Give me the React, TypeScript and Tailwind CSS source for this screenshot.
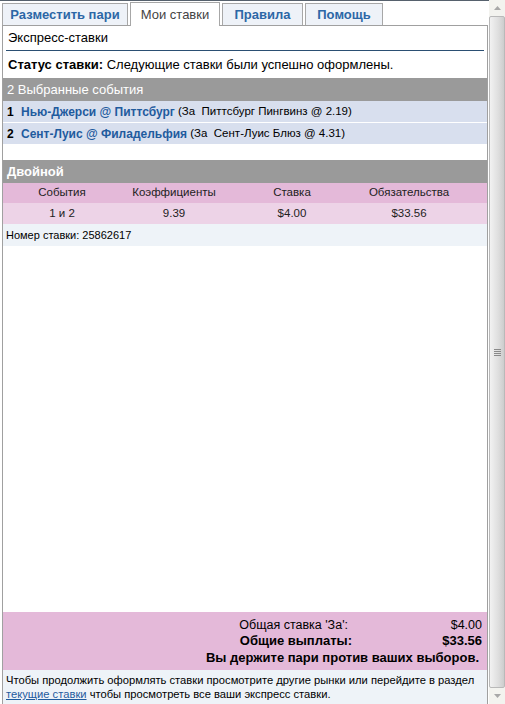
import React from "react";

const font = { fontFamily: '"Liberation Sans", Arial, sans-serif' };

function Scrollbar() {
  return (
    <div className="flex h-[704px] w-[16px] flex-col bg-[#f3f3ef]">
      <div className="flex h-[16px] items-center justify-center">
        <svg width="7" height="4" viewBox="0 0 7 4">
          <path d="M0 4 L3.5 0 L7 4 Z" fill="#a8a8a8" />
        </svg>
      </div>
      <div className="flex flex-1 items-center justify-center rounded-[2px] border border-[#b9b9b9] bg-[linear-gradient(90deg,#f2f2f2,#dedede_60%,#cdcdcd)]">
        <div className="flex flex-col gap-[1px]">
          <div className="h-[1px] w-[7px] bg-[#8a8a8a]" />
          <div className="h-[1px] w-[7px] bg-[#8a8a8a]" />
          <div className="h-[1px] w-[7px] bg-[#8a8a8a]" />
          <div className="h-[1px] w-[7px] bg-[#8a8a8a]" />
        </div>
      </div>
      <div className="flex h-[16px] items-center justify-center">
        <svg width="7" height="4" viewBox="0 0 7 4">
          <path d="M0 0 L3.5 4 L7 0 Z" fill="#a8a8a8" />
        </svg>
      </div>
    </div>
  );
}

export default function App() {
  return (
    <div className="flex h-[704px] w-[505px] overflow-hidden bg-white" style={font}>
      <div className="flex w-[489px] flex-col border-t border-[#56616d]">
        {/* tabs */}
        <div className="flex h-[24px] items-end gap-[2px] pl-[2px]">
          <div className="flex h-[22px] w-[126px] items-center justify-center border border-b-0 border-[#a7a7a7] bg-[#eef2f8] text-[13px] font-bold text-[#2c67a6]">
            Разместить пари
          </div>
          <div className="relative -mb-[1px] flex h-[24px] w-[90px] items-center justify-center border border-b-0 border-[#a7a7a7] bg-white text-[13px] text-[#444]">
            Мои ставки
          </div>
          <div className="flex h-[22px] w-[81px] items-center justify-center border border-b-0 border-[#a7a7a7] bg-[#eef2f8] text-[13px] font-bold text-[#2c67a6]">
            Правила
          </div>
          <div className="flex h-[22px] w-[78px] items-center justify-center border border-b-0 border-[#a7a7a7] bg-[#eef2f8] text-[13px] font-bold text-[#2c67a6]">
            Помощь
          </div>
        </div>
        {/* panel */}
        <div className="ml-[2px] mr-[1px] flex flex-1 flex-col border border-b-0 border-[#a0a0a0]">
          <div className="mx-[3px] flex h-[25px] items-center border-b border-[#2b4f73] pl-[2px] text-[13px] text-black">
            Экспресс-ставки
          </div>
          <div className="flex h-[27px] items-center pl-[5px] text-[13px] text-black">
            <span className="font-bold">Статус ставки:</span>&nbsp;Следующие ставки были успешно оформлены.
          </div>
          <div className="flex h-[23px] items-center bg-[#9a9a9a] pl-[4px] text-[13px] text-white">
            2 Выбранные события
          </div>
          <div className="flex h-[22px] items-center border-b border-white bg-[#d8dfee] pl-[4px] text-[12px] text-black">
            <span className="w-[14px] font-bold">1</span>
            <span className="font-bold text-[#1f5b9e]">Нью-Джерси @ Питтсбург</span>
            <span className="text-[11.5px]">&nbsp;(За&nbsp; Питтсбург Пингвинз @ 2.19)</span>
          </div>
          <div className="flex h-[21px] items-center bg-[#d8dfee] pl-[4px] text-[12px] text-black">
            <span className="w-[14px] font-bold">2</span>
            <span className="font-bold text-[#1f5b9e]">Сент-Луис @ Филадельфия</span>
            <span className="text-[11.5px]">&nbsp;(За&nbsp; Сент-Луис Блюз @ 4.31)</span>
          </div>
          <div className="h-[16px]" />
          <div className="flex h-[23px] items-center bg-[#9a9a9a] pl-[4px] text-[13px] font-bold text-white">
            Двойной
          </div>
          <div className="grid h-[20px] grid-cols-[118px_106px_130px_104px_1fr] items-center bg-[#e4b9d9] text-[11.5px] text-[#222]">
            <span className="text-center">События</span>
            <span className="text-center">Коэффициенты</span>
            <span className="text-center">Ставка</span>
            <span className="text-center">Обязательства</span>
            <span />
          </div>
          <div className="grid h-[21px] grid-cols-[118px_106px_130px_104px_1fr] items-center bg-[#edd3e7] text-[11.5px] text-[#222]">
            <span className="text-center">1 и 2</span>
            <span className="text-center">9.39</span>
            <span className="text-center">$4.00</span>
            <span className="text-center">$33.56</span>
            <span />
          </div>
          <div className="flex h-[22px] items-center bg-[#eef3f8] pl-[3px] text-[11px] text-black">
            Номер ставки: 25862617
          </div>
          <div className="flex-1" />
          <div className="flex h-[58px] flex-col justify-center bg-[#e4b9d9] pr-[5px] text-[13px] text-black">
            <div className="grid grid-cols-[1fr_130px] leading-[16px]">
              <span className="pr-[4px] text-right text-[12.5px]">Общая ставка 'За':</span>
              <span className="text-right text-[12.5px]">$4.00</span>
              <span className="text-right font-bold">Общие выплаты:</span>
              <span className="text-right font-bold">$33.56</span>
            </div>
            <div className="pr-[3px] text-right font-bold leading-[17px]">
              Вы держите пари против ваших выборов.
            </div>
          </div>
          <div className="flex h-[34px] flex-col justify-center bg-[#eef3f8] pl-[3px] text-[11.2px] leading-[14px] text-black">
            <div className="whitespace-nowrap">Чтобы продолжить оформлять ставки просмотрите другие рынки или перейдите в раздел</div>
            <div className="whitespace-nowrap">
              <span className="text-[#1f5b9e] underline">текущие ставки</span> чтобы просмотреть все ваши экспресс ставки.
            </div>
          </div>
        </div>
      </div>
      <Scrollbar />
    </div>
  );
}
